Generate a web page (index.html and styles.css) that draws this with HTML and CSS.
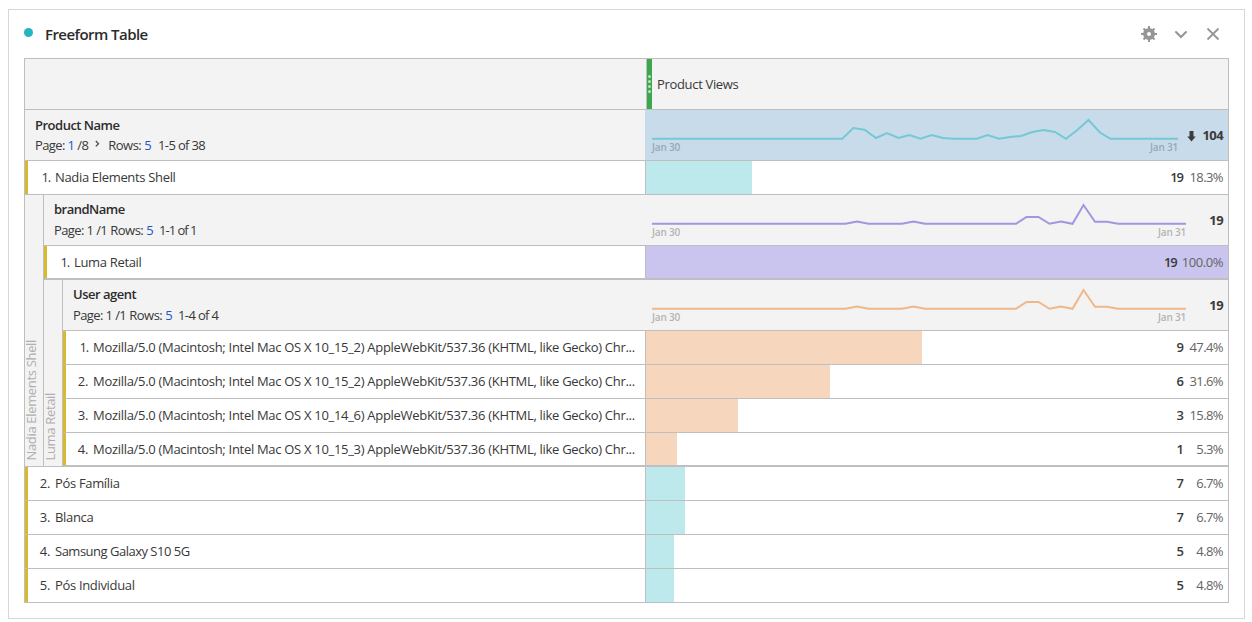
FILE: index.html
```
<!DOCTYPE html>
<html lang="en">
<head>
<meta charset="utf-8">
<title>Freeform Table</title>
<link rel="stylesheet" href="styles.css">
</head>
<body>
<section class="panel">
  <header class="panel-header">
    <span class="dot"></span>
    <h1 class="panel-title">Freeform Table</h1>
    <div class="tools">
      <svg class="icon" width="16" height="16" viewBox="0 0 16 16"><circle cx="8" cy="8" r="4" fill="none" stroke="#969696" stroke-width="4"/><path fill="none" stroke="#969696" stroke-width="2" d="M8 0v3M8 13v3M0 8h3M13 8h3M2.500 2.500l2 2M11.500 11.500l2 2M13.500 2.500l-2 2M4.500 11.500l-2 2"/></svg>
      <svg class="icon" width="16" height="16" viewBox="0 0 16 16"><path fill="none" stroke="#969696" stroke-width="2.100" stroke-linecap="round" d="M3 6l5 5 5-5"/></svg>
      <svg class="icon" width="16" height="16" viewBox="0 0 16 16"><path fill="none" stroke="#969696" stroke-width="1.800" d="M2.500 2.500l11 11M13.500 2.500l-11 11"/></svg>
    </div>
  </header>

  <div class="table">
    <div class="row head">
      <div class="name"></div>
      <div class="metric"><span class="grip"><i></i><i></i><i></i><i></i></span><span class="metric-name">Product Views</span></div>
    </div>

    <div class="row summary total">
      <div class="name">
        <div class="dimension">Product Name</div>
        <div class="paging"><span class="page">Page: <a>1</a> /8</span><svg class="next" width="5" height="8" viewBox="0 0 5 8"><path fill="none" stroke="#4b4b4b" stroke-width="1.300" d="M.8 1l2.700 2.700L.8 6.400"/></svg><span class="rows">Rows: <a>5</a></span><span class="range">1-5 of 38</span></div>
      </div>
      <div class="metric">
        <div class="trend short">
          <svg class="spark teal" width="526" height="34" viewBox="0 0 526 34"><path d="M0 28.800H190.300L201.300 18 212.600 19.800 224 28 235 23 246.500 28 257.500 25 268.500 28.800 279.700 25 291 28 302 28.800H325L335.500 25 347 28.800 358 27 369 26 380.500 22 391.500 20 403 22 414 28.800 425 20.300 436.500 10 448 22.500 458.500 28.800H526"/></svg>
          <div class="axis"><span>Jan 30</span><span>Jan 31</span></div>
        </div>
        <svg class="sort" width="9" height="11" viewBox="0 0 9 11"><path fill="#3c3c3c" d="M2.500 0h4v5.500h2.200L4.500 10.500.3 5.500h2.200z"/></svg>
        <b class="sum">104</b>
      </div>
    </div>

    <div class="row item"><div class="name"><span class="idx one">1.</span><span class="label">Nadia Elements Shell</span></div><div class="metric"><span class="bar teal" style="width:106px"></span><b class="count">19</b><span class="pct">18.3%</span></div></div>

    <div class="group outer">
      <div class="gutter"><span>Nadia Elements Shell</span></div>
      <div class="nested">
        <div class="row summary">
          <div class="name">
            <div class="dimension">brandName</div>
            <div class="paging"><span class="page">Page: 1 /1</span><span class="rows">Rows: <a>5</a></span><span class="range ones">1-1 of 1</span></div>
          </div>
          <div class="metric">
            <div class="trend">
              <svg class="spark purple" width="534" height="34" viewBox="0 0 534 34"><path d="M0 28.800H193.500L205 26.400 216.500 28.800H250L261.500 26.400 273 28.800H364L374.500 22H386.500L397.500 28.800 409 26.500 420.500 28.800 431.500 10 443 26.700H455L466 28.800H534"/></svg>
              <div class="axis"><span>Jan 30</span><span>Jan 31</span></div>
            </div>
            <b class="sum">19</b>
          </div>
        </div>
        <div class="row item last"><div class="name"><span class="idx one">1.</span><span class="label">Luma Retail</span></div><div class="metric"><span class="bar purple" style="width:582px"></span><b class="count">19</b><span class="pct full">100.0%</span></div></div>

        <div class="group inner">
          <div class="gutter"><span>Luma Retail</span></div>
          <div class="nested">
            <div class="row summary">
              <div class="name">
                <div class="dimension">User agent</div>
                <div class="paging"><span class="page">Page: 1 /1</span><span class="rows">Rows: <a>5</a></span><span class="range">1-4 of 4</span></div>
              </div>
              <div class="metric">
                <div class="trend">
                  <svg class="spark orange" width="534" height="34" viewBox="0 0 534 34"><path d="M0 28.800H193.500L205 26.400 216.500 28.800H250L261.500 26.400 273 28.800H364L374.500 22H386.500L397.500 28.800 409 26.500 420.500 28.800 431.500 10 443 26.700H455L466 28.800H534"/></svg>
                  <div class="axis"><span>Jan 30</span><span>Jan 31</span></div>
                </div>
                <b class="sum">19</b>
              </div>
            </div>
            <div class="row item"><div class="name"><span class="idx one">1.</span><span class="label agent">Mozilla/5.0 (Macintosh; Intel Mac OS X 10_15_2) AppleWebKit/537.36 (KHTML, like Gecko) Chr...</span></div><div class="metric"><span class="bar orange" style="width:276px"></span><b class="count">9</b><span class="pct">47.4%</span></div></div>
            <div class="row item"><div class="name"><span class="idx">2.</span><span class="label agent">Mozilla/5.0 (Macintosh; Intel Mac OS X 10_15_2) AppleWebKit/537.36 (KHTML, like Gecko) Chr...</span></div><div class="metric"><span class="bar orange" style="width:184px"></span><b class="count">6</b><span class="pct">31.6%</span></div></div>
            <div class="row item"><div class="name"><span class="idx">3.</span><span class="label agent">Mozilla/5.0 (Macintosh; Intel Mac OS X 10_14_6) AppleWebKit/537.36 (KHTML, like Gecko) Chr...</span></div><div class="metric"><span class="bar orange" style="width:92px"></span><b class="count">3</b><span class="pct">15.8%</span></div></div>
            <div class="row item last"><div class="name"><span class="idx">4.</span><span class="label agent">Mozilla/5.0 (Macintosh; Intel Mac OS X 10_15_3) AppleWebKit/537.36 (KHTML, like Gecko) Chr...</span></div><div class="metric"><span class="bar orange" style="width:31px"></span><b class="count">1</b><span class="pct">5.3%</span></div></div>
          </div>
        </div>
      </div>
    </div>

    <div class="row item"><div class="name"><span class="idx">2.</span><span class="label">Pós Família</span></div><div class="metric"><span class="bar teal" style="width:39px"></span><b class="count">7</b><span class="pct">6.7%</span></div></div>
    <div class="row item"><div class="name"><span class="idx">3.</span><span class="label">Blanca</span></div><div class="metric"><span class="bar teal" style="width:39px"></span><b class="count">7</b><span class="pct">6.7%</span></div></div>
    <div class="row item"><div class="name"><span class="idx">4.</span><span class="label tight">Samsung Galaxy S10 5G</span></div><div class="metric"><span class="bar teal" style="width:28px"></span><b class="count">5</b><span class="pct">4.8%</span></div></div>
    <div class="row item"><div class="name"><span class="idx">5.</span><span class="label">Pós Individual</span></div><div class="metric"><span class="bar teal" style="width:28px"></span><b class="count">5</b><span class="pct">4.8%</span></div></div>
  </div>
</section>
</body>
</html>
```

FILE: styles.css
```
* { box-sizing: border-box; }
body {
  margin: 0;
  padding: 9px 0 0 8px;
  background: #fff;
  color: #383838;
  font: 13px/20px "Open Sans", "Noto Sans", sans-serif;
  letter-spacing: -0.33px;
  overflow: hidden;
}
.panel {
  width: 1237px;
  height: 610px;
  padding: 0 15px;
  border: 1px solid #d8d8d8;
}
.panel-header { display: flex; height: 48px; }
.dot { width: 9px; height: 9px; margin-top: 18px; border-radius: 50%; background: #26b5bf; }
.panel-title {
  margin: 14px 0 0 12px;
  color: #2c2c2c;
  font-size: 15px;
  line-height: 20px;
  font-weight: 600;
  letter-spacing: -0.55px;
}
.tools { display: flex; gap: 16px; margin: 16px 8px 0 auto; }
.icon { display: block; }

.table { border: 1px solid #bfbfbf; border-bottom: 0; }
.row { display: flex; border-bottom: 1px solid #bfbfbf; }
.name { flex: 1; min-width: 0; }
.metric { display: flex; flex: none; width: 583px; }

.head, .summary { height: 51px; background: #f3f3f3; }
.head .metric { width: 582px; border-left: 1px solid #bfbfbf; align-items: center; }
.grip {
  display: flex;
  flex-direction: column;
  align-items: center;
  justify-content: center;
  gap: 2px;
  width: 5px;
  height: 50px;
  background: #3da74e;
}
.grip i { width: 3px; height: 3px; border-radius: 50%; background: #b9dfbf; }
.metric-name { margin-left: 5px; }

.summary .name { padding: 5px 0 0 10px; }
.dimension { color: #2c2c2c; font-weight: 600; letter-spacing: -0.5px; }
.nested .dimension { margin: -1px 0 1px; }
.paging { display: flex; white-space: nowrap; letter-spacing: -0.6px; }
.paging a { color: #1b57c4; }
.next { margin: 5px 8px 0 7px; }
.page + .rows { margin-left: 3px; }
.rows { margin-right: 7px; letter-spacing: -0.5px; }
.range { letter-spacing: -0.65px; }
.range.ones { letter-spacing: -1px; }
.nested .rows { margin-right: 6px; }
.total .metric { background: #c8dbea; }
.summary .metric { position: relative; align-items: center; padding-right: 5px; }
.trend { align-self: flex-start; flex: none; width: 534px; margin-left: 7px; }
.trend.short { width: 526px; }
.spark { display: block; fill: none; stroke-width: 2; }
.spark.teal { stroke: #76c8d4; }
.spark.purple { stroke: #a097df; }
.spark.orange { stroke: #edb88a; }
.axis {
  display: flex;
  justify-content: space-between;
  margin-top: -3px;
  color: #b3b3b3;
  font-size: 10px;
  line-height: 12px;
  font-weight: 600;
  letter-spacing: -0.2px;
}
.total .axis { color: #98a8b4; }
.sum { margin-left: auto; color: #3a3a3a; font-weight: 700; letter-spacing: -0.6px; }
.sort { margin: 2px 0 0 9px; }

.item { height: 34px; background: #fff; }
.item.last { height: 33px; }
.item .name { display: flex; align-items: center; padding-bottom: 1px; border-left: 3px solid #d9b92d; white-space: nowrap; }
.idx { flex: none; width: 22px; margin-right: 5px; text-align: right; }
.idx.one { letter-spacing: -1.2px; }
.label.tight { letter-spacing: -0.5px; }
.label.agent { letter-spacing: -0.3px; }
.item .metric { position: relative; align-items: center; justify-content: flex-end; padding: 0 5px 1px 0; border-left: 1px solid #bfbfbf; }
.item.last .name, .item.last .metric { padding-bottom: 0; }
.bar { position: absolute; left: 0; top: 0; bottom: 0; }
.bar.teal { background: #bde9ec; }
.bar.purple { background: #cac5ee; }
.bar.orange { background: #f6d7be; }
.count, .pct { position: relative; letter-spacing: -0.6px; }
.count { color: #3a3a3a; font-weight: 600; letter-spacing: -1px; }
.pct { min-width: 35px; margin-left: 5px; color: #646464; text-align: right; }
.pct.full { letter-spacing: -0.45px; }

.group { display: flex; background: #f3f3f3; }
.group.outer { border-bottom: 1px solid #bfbfbf; }
.group.inner { border-top: 1px solid #bfbfbf; }
.gutter {
  display: flex;
  align-items: flex-end;
  width: 19px;
  padding-bottom: 5px;
  border-right: 1px solid #bfbfbf;
  color: #aeaeae;
}
.gutter span { width: 15px; margin-left: -1px; line-height: 15px; writing-mode: vertical-rl; transform: rotate(180deg); white-space: nowrap; }
.nested { flex: 1; min-width: 0; }
```
